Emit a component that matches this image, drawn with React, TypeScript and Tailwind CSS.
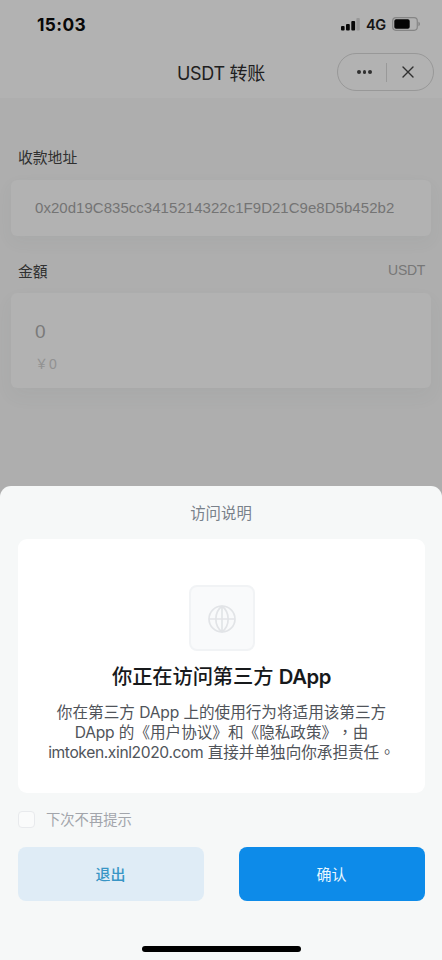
import React from "react";

function SignalIcon() {
  return (
    <svg width="19" height="13" viewBox="0 0 19 13">
      <rect x="0" y="8" width="3.6" height="4.4" rx="1" fill="#080808" />
      <rect x="5" y="6" width="3.8" height="6.4" rx="1" fill="#080808" />
      <rect x="10.3" y="3" width="3.8" height="9.4" rx="1" fill="#080808" />
      <rect x="15.4" y="0" width="3.4" height="12.4" rx="1" fill="#989898" />
    </svg>
  );
}

function BatteryIcon() {
  return (
    <svg width="29" height="14" viewBox="0 0 29 14">
      <rect x="0.7" y="0.7" width="24.6" height="12.6" rx="3.2" fill="none" stroke="#858585" strokeWidth="1.2" />
      <rect x="2.3" y="2.3" width="15.4" height="9.4" rx="1.8" fill="#050505" />
      <path d="M26.4 4.8c1.1.4 1.6 1.2 1.6 2.2s-.5 1.8-1.6 2.2z" fill="#858585" />
    </svg>
  );
}

function StatusBar() {
  return (
    <div className="flex h-12 items-center justify-between bg-[#b2b2b2] pl-[37px] pr-[21px]">
      <span className="mt-px font-['Inter',sans-serif] text-[17.3px] font-bold leading-5 tracking-[0.4px] text-[#080808]">15:03</span>
      <div className="flex items-center">
        <SignalIcon />
        <span className="ml-[6px] mr-[6px] mt-px font-['Inter',sans-serif] text-[14.5px] font-semibold leading-5 tracking-[-0.2px] text-[#151515]">4G</span>
        <BatteryIcon />
      </div>
    </div>
  );
}

function TitleBar() {
  return (
    <div className="grid h-[50px] grid-cols-[1fr_auto_1fr] items-center bg-[#b2b2b2] pr-2">
      <span className="col-start-2 ml-2 mt-px whitespace-nowrap font-['Inter','Noto_Sans_CJK_SC',sans-serif] text-[18px] leading-6 tracking-[-0.3px] text-[#202020]">USDT 转账</span>
      <div className="mt-[-2px] flex h-[38px] w-[97px] items-center justify-self-end rounded-full border border-[#989898]">
        <div className="flex flex-1 items-center justify-center gap-[2px] pl-[5px]">
          <i className="size-[3.5px] rounded-full bg-[#303030]" />
          <i className="size-[3.5px] rounded-full bg-[#303030]" />
          <i className="size-[3.5px] rounded-full bg-[#303030]" />
        </div>
        <div className="h-[19px] w-px bg-[#999]" />
        <div className="flex flex-1 items-center justify-center pr-1">
          <svg width="12" height="12" viewBox="0 0 12 12" fill="none" stroke="#303030" strokeWidth="1.4" strokeLinecap="round">
            <path d="M1 1l10 10M11 1L1 11" />
          </svg>
        </div>
      </div>
    </div>
  );
}

function TransferForm() {
  return (
    <div className="h-[388px] px-[11px] pt-[47px]">
      <div className="h-6 pl-[7px] font-['Noto_Sans_CJK_SC',sans-serif] text-[14.8px] leading-6 text-[#303030]">收款地址</div>
      <div className="mt-[11px] flex h-14 items-center rounded-md bg-[#b2b2b2] pl-6 shadow-[0_6px_16px_rgba(80,100,95,0.06)]">
        <span className="whitespace-nowrap font-['Liberation_Sans',sans-serif] text-[15px] leading-5 tracking-[0.035px] text-[#747474]">0x20d19C835cc3415214322c1F9D21C9e8D5b452b2</span>
      </div>
      <div className="mt-[23px] flex h-6 items-center justify-between pl-[7px] pr-[6px]">
        <span className="font-['Noto_Sans_CJK_TC',sans-serif] text-[14.8px] leading-6 text-[#303030]">金額</span>
        <span className="mt-[-2px] font-['Liberation_Sans',sans-serif] text-[14px] leading-5 tracking-[-0.3px] text-[#777]">USDT</span>
      </div>
      <div className="mt-[10px] h-[95px] rounded-md bg-[#b2b2b2] pl-6 pt-[27px] shadow-[0_8px_18px_rgba(80,100,95,0.06)]">
        <div className="font-['Liberation_Sans',sans-serif] text-[19px] leading-6 text-[#7a7a7a]">0</div>
        <div className="mt-[9px] flex h-5 items-center font-['Liberation_Sans','Noto_Sans_CJK_SC',sans-serif] text-[14px] leading-5 text-[#919191]">
          <span className="w-[14px] font-['Noto_Sans_CJK_SC',sans-serif] text-[13px]">￥</span>
          <span className="mt-[2px]">0</span>
        </div>
      </div>
    </div>
  );
}

function GlobeBadge() {
  return (
    <div className="flex size-[66px] items-center justify-center rounded-lg border-2 border-[#f1f3f5] bg-[#f9fafb]">
      <svg className="mt-[2px]" width="30" height="30" viewBox="0 0 30 30" fill="none" stroke="#e2e4e7" strokeWidth="1.7">
        <circle cx="15" cy="15" r="13" />
        <path d="M2 15h26M15 2v26M15 2C6.8 8.5 6.8 21.5 15 28M15 2c8.2 6.5 8.2 19.5 0 26" />
      </svg>
    </div>
  );
}

function AccessSheet() {
  return (
    <div className="flex h-[474px] flex-col rounded-t-[11px] bg-[#f6f8f8] px-[18px] font-['Inter','Noto_Sans_CJK_TC',sans-serif]">
      <div className="mt-[14px] h-6 text-center font-['Noto_Sans_CJK_SC',sans-serif] text-[15.4px] leading-6 text-[#79818a]">访问说明</div>
      <div className="mt-[15px] flex h-[254px] w-[407px] flex-col items-center rounded-[9px] bg-white pt-[46px]">
        <GlobeBadge />
        <h1 className="mt-[12px] h-7 whitespace-nowrap font-['Inter','Noto_Sans_CJK_SC',sans-serif] text-[20.3px] font-medium leading-7 tracking-[-0.1px] text-[#17191b]">
          你正在访问第三方 <span className="font-semibold tracking-[-0.4px]">DApp</span>
        </h1>
        <div className="mt-[12px] whitespace-nowrap text-center font-['Inter','Noto_Sans_CJK_SC',sans-serif] text-[15.6px] leading-5 text-[#50545a] [text-spacing-trim:space-all]">
          <p className="h-5">你在第三方 <span className="tracking-[-0.2px]">DApp</span> 上的使用行为将适用该第三方</p>
          <p className="h-5"><span className="tracking-[-0.2px]">DApp</span> 的《用户协议》和《隐私政策》<span lang="zh-TW" className="font-['Noto_Sans_CJK_TC',sans-serif] leading-[0]">，</span>由</p>
          <p className="h-5"><span className="tracking-[-0.38px]">imtoken.xinl2020.com</span> 直接并单独向你承担责任<span lang="zh-TW" className="font-['Noto_Sans_CJK_TC',sans-serif] leading-[0]">。</span></p>
        </div>
      </div>
      <label className="mt-[14px] flex h-6 items-center">
        <span className="size-[17px] rounded-[4px] border border-[#e8eaed] bg-[#fafbfb]" />
        <span className="ml-[11px] font-['Noto_Sans_CJK_SC',sans-serif] text-[14.3px] leading-6 text-[#a2a5ab]">下次不再提示</span>
      </label>
      <div className="mt-[16px] grid w-[407px] grid-cols-2 gap-[35px] font-['Noto_Sans_CJK_SC',sans-serif] text-[15px] leading-6">
        <button className="h-[54px] rounded-lg bg-[#dfecf6] pb-px pr-px font-medium text-[#3895c5]">退出</button>
        <button className="h-[54px] rounded-lg bg-[#0d8be9] pb-px pr-px text-[#e8f7ff]">确认</button>
      </div>
      <div className="mx-auto mt-auto mb-[8px] h-[6px] w-[159px] rounded-full bg-black" />
    </div>
  );
}

export default function App() {
  return (
    <main className="flex h-[960px] w-[442px] flex-col overflow-hidden bg-[#aeaeae]">
      <StatusBar />
      <TitleBar />
      <TransferForm />
      <AccessSheet />
    </main>
  );
}
